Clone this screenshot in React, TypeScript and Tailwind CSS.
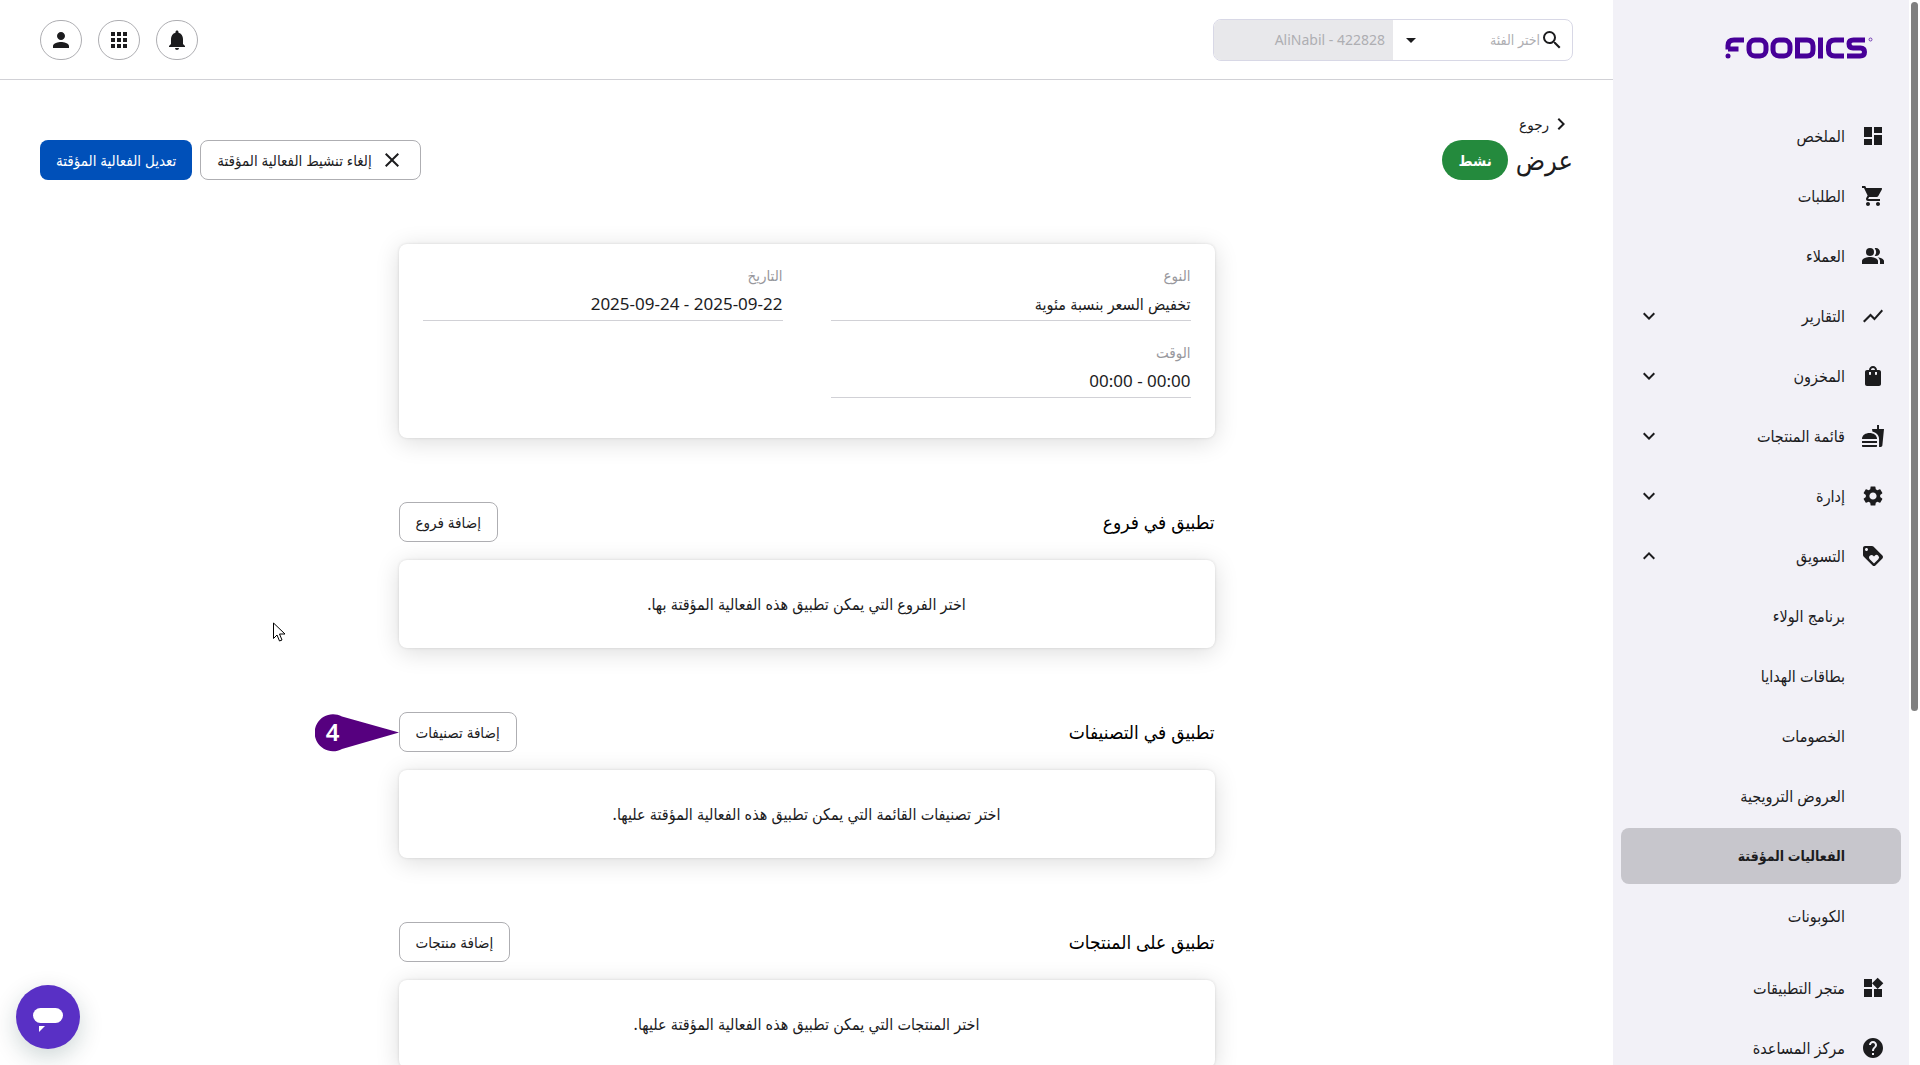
import React from "react";
import {
  MdDashboard, MdShoppingCart, MdPeopleAlt, MdShowChart, MdFastfood, MdSettings, MdLoyalty,
  MdHelp, MdWidgets, MdKeyboardArrowDown, MdKeyboardArrowUp, MdKeyboardArrowRight, MdSearch,
  MdNotifications, MdApps, MdPerson, MdClose, MdShoppingBag, MdArrowDropDown,
} from "react-icons/md";

const sans = "font-['Noto_Sans','DejaVu_Sans_Condensed','DejaVu_Sans',sans-serif]";

type Item = { label: string; Icon: React.ComponentType<{ className?: string }>; open?: boolean };

const items: Item[] = [
  { label: "الملخص", Icon: MdDashboard },
  { label: "الطلبات", Icon: MdShoppingCart },
  { label: "العملاء", Icon: MdPeopleAlt },
  { label: "التقارير", Icon: MdShowChart, open: false },
  { label: "المخزون", Icon: MdShoppingBag, open: false },
  { label: "قائمة المنتجات", Icon: MdFastfood, open: false },
  { label: "إدارة", Icon: MdSettings, open: false },
  { label: "التسويق", Icon: MdLoyalty, open: true },
];

const marketing = ["برنامج الولاء", "بطاقات الهدايا", "الخصومات", "العروض الترويجية", "الفعاليات المؤقتة", "الكوبونات"];

const footer: Item[] = [
  { label: "متجر التطبيقات", Icon: MdWidgets },
  { label: "مركز المساعدة", Icon: MdHelp },
];

const sections = [
  { title: "تطبيق في فروع", action: "إضافة فروع", text: "اختر الفروع التي يمكن تطبيق هذه الفعالية المؤقتة بها." },
  { title: "تطبيق في التصنيفات", action: "إضافة تصنيفات", text: "اختر تصنيفات القائمة التي يمكن تطبيق هذه الفعالية المؤقتة عليها.", step: "4" },
  { title: "تطبيق على المنتجات", action: "إضافة منتجات", text: "اختر المنتجات التي يمكن تطبيق هذه الفعالية المؤقتة عليها." },
];

function Logo() {
  return (
    <svg width="148" height="22" viewBox="0 0 148 22" fill="none" stroke="#470098" strokeWidth="5" role="img" aria-label="Foodics">
      <path d="M19 3H9C5 3 3 5 3 8.500v4M3 12h10.500" />
      <circle cx="3" cy="19" r="2.500" fill="#470098" stroke="none" />
      <rect x="24" y="3" width="17" height="16" rx="6" />
      <rect x="48" y="3" width="17" height="16" rx="6" />
      <path d="M72.500 3H82c4 0 6 2 6 6v4c0 4-2 6-6 6h-9.500z" />
      <path d="M95.500 .5v21M119 3h-9c-4 0-6.500 2-6.500 6v4c0 4 2.500 6 6.500 6h9M140 3h-11.500c-3 0-4.500 1-4.500 3.500 0 3 1.500 4.500 4 4.500h7.500c2.500 0 4 1.500 4 4 0 2.500-1.500 4-4.500 4H122" />
      <circle cx="145.500" cy="2.500" r="1.500" strokeWidth="1" opacity=".7" />
    </svg>
  );
}

function NavItem({ label, Icon, open }: Item) {
  return (
    <a href="#" className="flex h-14 items-center rounded-lg px-4">
      <Icon className="size-6" />
      <span className="ms-4 grow">{label}</span>
      {open === true && <MdKeyboardArrowUp className="size-6" />}
      {open === false && <MdKeyboardArrowDown className="size-6" />}
    </a>
  );
}

function Field({ label, value, numeric }: { label: string; value: string; numeric?: boolean }) {
  return (
    <div className="border-b border-[#d1d1d6] pb-0.5">
      <dt className="text-[15px] leading-[30px] text-[#98989d]">{label}</dt>
      <dd className={numeric ? "text-[17px] leading-7" : "text-base leading-7"}>{value}</dd>
    </div>
  );
}

const card = "rounded-lg bg-white shadow-[0_4px_24px_rgba(0,0,0,0.14),0_0_3px_rgba(0,0,0,0.12)]";
const outline = "flex h-10 items-center rounded-lg border border-[#aeaeb2] bg-white px-4 text-[15px]";
const round = "flex h-10 w-[42px] items-center justify-center rounded-full border border-[#aeaeb2]";

export default function App() {
  return (
    <div dir="rtl" className={`flex h-screen overflow-hidden bg-white text-[#1c1c1e] ${sans}`}>
      <div className="w-[11px] shrink-0 px-0.5 pt-0.5">
        <div className="h-2/3 rounded-full bg-[#808080]" />
      </div>

      <aside className="w-[296px] shrink-0 overflow-hidden bg-[#f2f1f7] text-base">
        <div className="flex h-[108px] items-start ps-9 pt-[37px]">
          <Logo />
        </div>
        <nav className="flex flex-col gap-1 px-2">
          {items.map((i) => <NavItem key={i.label} {...i} />)}
          {marketing.map((label) => (
            <a key={label} href="#" className={label === "الفعاليات المؤقتة" ? "flex h-14 items-center rounded-lg bg-[#c7c6cc] ps-14 text-sm font-bold" : "flex h-14 items-center rounded-lg ps-14"}>
              {label}
            </a>
          ))}
          <div className="mt-3 flex flex-col gap-1">
            {footer.map((i) => <NavItem key={i.label} {...i} />)}
          </div>
        </nav>
      </aside>

      <div className="flex min-w-0 grow flex-col">
        <header className="flex h-20 shrink-0 items-center justify-between border-b border-[#d1d1d6] px-10">
          <div className="flex h-[42px] w-[360px] overflow-hidden rounded-lg border border-[#d8d8e6]">
            <div className="flex w-1/2 items-center ps-2">
              <MdSearch className="size-6 shrink-0" />
              <div className="relative flex grow items-center">
                <select aria-label="اختر الفئة" className="h-10 w-full appearance-none bg-transparent text-sm text-[#aeaeb2] outline-none">
                  <option>اختر الفئة</option>
                </select>
                <MdArrowDropDown className="pointer-events-none absolute left-1.5 size-6" />
              </div>
            </div>
            <input disabled aria-label="الحساب" value="AliNabil - 422828" dir="ltr" className="w-1/2 bg-[#e8e8eb] px-2 text-right text-sm text-[#aeaeb2]" />
          </div>
          <div className="flex gap-4">
            <button aria-label="الإشعارات" className={round}><MdNotifications className="size-6" /></button>
            <button aria-label="التطبيقات" className={round}><MdApps className="size-6" /></button>
            <button aria-label="الملف الشخصي" className={round}><MdPerson className="size-6" /></button>
          </div>
        </header>

        <main className="px-10 pt-7">
          <a href="#" className="flex h-8 w-fit items-center text-[15px]">
            <MdKeyboardArrowRight className="size-6" />
            رجوع
          </a>
          <div className="flex items-center gap-2">
            <h1 className="text-[27px] leading-10">عرض</h1>
            <span className="flex h-10 items-center rounded-full bg-[#248a3d] px-4 text-[15px] font-bold text-white">نشط</span>
            <div className="ms-auto flex gap-2">
              <button className={outline}><MdClose className="me-2 size-6" />إلغاء تنشيط الفعالية المؤقتة</button>
              <button className="h-10 rounded-lg bg-[#0050b9] px-4 text-[15px] text-white">تعديل الفعالية المؤقتة</button>
            </div>
          </div>

          <div className="mx-auto mt-16 max-w-[816px]">
            <dl className={`grid grid-cols-2 gap-x-12 gap-y-4 px-6 pt-4 pb-10 ${card}`}>
              <Field label="النوع" value="تخفيض السعر بنسبة مئوية" />
              <Field label="التاريخ" value="2025-09-22 - 2025-09-24" numeric />
              <Field label="الوقت" value="00:00 - 00:00" numeric />
            </dl>
            {sections.map((s) => (
              <section key={s.title} className="mt-16">
                <div className="mb-[18px] flex items-center justify-between">
                  <h2 className="text-[19px] text-black">{s.title}</h2>
                  <div className="relative">
                    <button className={outline}>{s.action}</button>
                    {s.step && (
                      <div className="absolute top-0 right-full h-10 w-[84px]">
                        <svg viewBox="0 0 84 40" className="size-full">
                          <path d="M84 20.500L27 4.500A18.500 18.500 0 1 0 27 37z" fill="#56007f" />
                        </svg>
                        <span className="absolute inset-y-0 left-0 flex w-9 items-center justify-center text-2xl font-semibold text-white">{s.step}</span>
                      </div>
                    )}
                  </div>
                </div>
                <p className={`flex h-[88px] items-center justify-center text-base ${card}`}>{s.text}</p>
              </section>
            ))}
          </div>
        </main>
      </div>

      <button aria-label="محادثة" className="fixed bottom-4 left-4 flex size-16 items-center justify-center rounded-full bg-[#5930c5] shadow-[0_8px_24px_rgba(0,50,50,0.2)]">
        <svg width="32" height="32" viewBox="0 0 32 32" fill="white">
          <rect x="1" y="7" width="30" height="15" rx="7.500" />
          <path d="M7 25h6l-6 6z" />
        </svg>
      </button>

      <svg className="pointer-events-none fixed top-[622px] left-[273px]" width="13" height="20" viewBox="0 0 13 20" fill="white" stroke="black" strokeWidth="1">
        <path d="M.5 1v15.500l3.500-3.500 2.500 6 2.500-1-2.500-6H12z" />
      </svg>
    </div>
  );
}
